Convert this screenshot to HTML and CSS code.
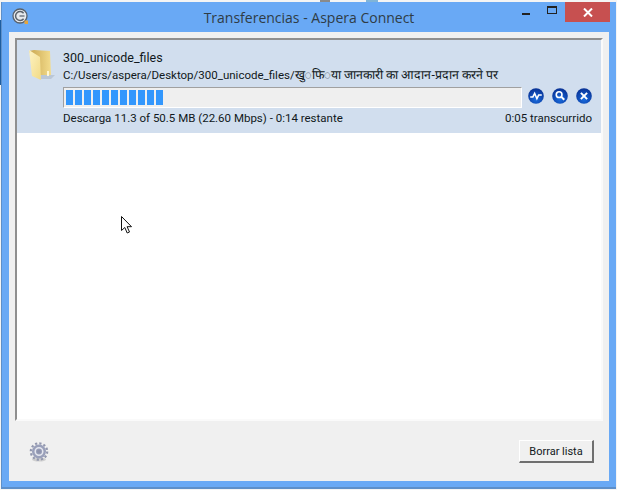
FILE: index.html
```html
<!DOCTYPE html>
<html lang="es">
<head>
<meta charset="utf-8">
<title>Transferencias - Aspera Connect</title>
<link rel="stylesheet" href="styles.css">
</head>
<body>
<div class="window">
  <header class="titlebar">
    <svg class="app-icon" width="16" height="16" viewBox="0 0 16 16">
      <circle cx="8" cy="8" r="7" fill="#e6e9ed" stroke="#59616b" stroke-width="1.3"/>
      <path d="M11.6 5.2A4.5 4.5 0 1 0 11.6 10.8" fill="none" stroke="#59616b" stroke-width="1.5"/>
      <path d="M7.5 8h5" stroke="#6b737d" stroke-width="1.4"/>
      <rect x="12.5" y="12.5" width="3.5" height="3.5" fill="#e5a53c"/>
    </svg>
    <h1 class="title">Transferencias - Aspera Connect</h1>
    <div class="controls">
      <span class="ctl ctl-min"><i class="min-bar"></i></span>
      <span class="ctl ctl-max"><i class="max-box"></i></span>
      <span class="ctl ctl-close">
        <svg width="10" height="9" viewBox="0 0 10 9"><path d="M1 .5l8 8M9 .5l-8 8" stroke="#fff" stroke-width="2"/></svg>
      </span>
    </div>
  </header>
  <div class="client">
    <main class="list">
      <section class="transfer">
        <svg class="folder" width="30" height="34" viewBox="0 0 30 34">
          <defs>
            <linearGradient id="fg" x1="0" y1="0" x2="1" y2="1"><stop offset="0" stop-color="#fdf3c4"/><stop offset="1" stop-color="#f2da85"/></linearGradient>
            <linearGradient id="bk" x1="0" y1="0" x2="1" y2="0"><stop offset="0" stop-color="#c9a650"/><stop offset="1" stop-color="#f3dc8c"/></linearGradient>
          </defs>
          <path d="M14 27l14 0 -4 4 -10 0z" fill="#a9b4c2" opacity=".55"/>
          <path d="M2 3l5 -1 16 1 1 24 -12 0z" fill="url(#bk)"/>
          <path d="M2 2l11 7 1 23 -9 -4z" fill="url(#fg)"/>
          <path d="M20 23h2v5h-2z" fill="#fff7d4"/>
        </svg>
        <div class="info">
          <div class="name">300_unicode_files</div>
          <div class="path">C:/Users/aspera/Desktop/300_unicode_files/<span class="deva">खु◌फि◌या जानकारी का आदान-प्रदान करने पर</span></div>
          <div class="bar-row">
            <div class="bar">
              <div class="fill"></div>
            </div>
            <div class="actions">
              <svg class="act" width="16" height="16" viewBox="0 0 18 18"><use href="#disc"/><path d="M2.5 10h3l2-4 2.5 6 2-4h3.5" fill="none" stroke="#fff" stroke-width="1.7"/></svg>
              <svg class="act" width="16" height="16" viewBox="0 0 18 18"><use href="#disc"/><circle cx="8" cy="7.5" r="3.2" fill="none" stroke="#fff" stroke-width="1.8"/><path d="M10.5 10l3.3 3.3" stroke="#fff" stroke-width="2.3"/></svg>
              <svg class="act" width="16" height="16" viewBox="0 0 18 18"><use href="#disc"/><path d="M5.5 5.5l7 7M12.5 5.5l-7 7" stroke="#fff" stroke-width="2.2"/></svg>
            </div>
          </div>
          <div class="status">
            <span>Descarga 11.3 of 50.5 MB (22.60 Mbps) - 0:14 restante</span>
            <span>0:05 transcurrido</span>
          </div>
        </div>
      </section>
      <svg class="cursor" width="14" height="20" viewBox="0 0 14 20"><path d="M1.5 1.5v14l3.3-3 2.4 5.5 2.3-1-2.4-5.3h4.4z" fill="#fff" stroke="#111" stroke-width="1"/></svg>
    </main>
    <footer class="footer">
      <svg class="gear" width="20" height="20" viewBox="0 0 20 20">
        <ellipse cx="10" cy="17.5" rx="7" ry="2" fill="#cfcfcf"/>
        <circle cx="10" cy="9.5" r="8.2" fill="none" stroke="#9297ae" stroke-width="2.2" stroke-dasharray="2.2 2.1"/>
        <circle cx="10" cy="9.5" r="7" fill="#9aa0ba"/>
        <circle cx="10" cy="9.5" r="3.8" fill="none" stroke="#e4e6ee" stroke-width="1.5"/>
        <circle cx="10" cy="9.5" r="2" fill="#8e93ad"/>
      </svg>
      <button class="clear" type="button">Borrar lista</button>
    </footer>
  </div>
</div>
<svg class="defs" width="0" height="0" aria-hidden="true">
  <defs>
    <radialGradient id="dg" cx=".5" cy=".7" r=".7"><stop offset="0" stop-color="#1a6ee0"/><stop offset="1" stop-color="#072f92"/></radialGradient>
    <circle id="disc" cx="9" cy="9" r="8.8" fill="url(#dg)"/>
  </defs>
</svg>
</body>
</html>
```
FILE: styles.css
```css
* { box-sizing: border-box; }
html, body { margin: 0; height: 100%; }
body {
  background:
    linear-gradient(#1d5da0, #1d5da0) 0 20px / 1px 65px no-repeat,
    linear-gradient(#8a8a8a, #8a8a8a) 320px 0 / 10px 2px no-repeat,
    linear-gradient(#7fb4d8, #7fb4d8) 366px 0 / 12px 2px no-repeat,
    #f4f4f4;
  padding: 2px 1px 1px 1px;
  font-family: "Open Sans", "Noto Sans", sans-serif;
  overflow: hidden;
}
.defs { position: absolute; }
.window {
  width: 615px;
  height: 487px;
  background: #69a9f5;
  border-bottom: 2px solid #5d8fc9;
  border-left: 1px solid #5d8fc9;
  padding: 0 7px 6px 7px;
  display: flex;
  flex-direction: column;
}
.titlebar {
  height: 30px;
  flex: none;
  display: flex;
  align-items: flex-start;
  position: relative;
}
.app-icon { margin: 6px 0 0 3px; }
.title {
  position: absolute;
  left: 0; right: 0; top: 6px;
  margin: 0;
  text-align: center;
  font-size: 14px;
  line-height: 19px;
  font-weight: 400;
  color: #2f3c45;
}
.controls { margin-left: auto; display: flex; align-items: flex-start; margin-right: -1px; }
.ctl { display: flex; align-items: center; justify-content: center; height: 20px; }
.ctl-min { width: 27px; }
.ctl-max { width: 26px; }
.ctl-close { width: 45px; background: #c75050; }
.min-bar { width: 8px; height: 2px; background: #222; margin-top: 4px; }
.max-box { width: 10px; height: 8px; border: 1px solid #222; border-top-width: 2px; margin-top: -4px; }
.client {
  flex: 1;
  background: #f0f0f0;
  padding: 6px;
  display: flex;
  flex-direction: column;
  min-height: 0;
}
.list {
  height: 383px;
  flex: none;
  background: #fff;
  border-top: 2px solid #8f8f8f;
  border-left: 2px solid #8f8f8f;
  border-right: 2px solid #fafafa;
  border-bottom: 2px solid #fafafa;
  position: relative;
}
.transfer {
  height: 93px;
  background: #d1deee;
  display: flex;
  padding: 7px 9px 0 10px;
}
.folder { flex: none; margin-top: 1px; }
.info { flex: 1; margin-left: 6px; min-width: 0; font-family: Roboto, "Open Sans", sans-serif; font-size: 11.5px; color: #101820; }
.name { line-height: 17px; margin-top: 2px; font-size: 12.5px; }
.path { line-height: 17px; margin-top: 1px; white-space: nowrap; }
.deva { font-size: 12.3px; }
.bar-row { display: flex; align-items: flex-start; margin-top: 3px; }
.bar {
  width: 459px;
  height: 21px;
  flex: none;
  background: #efefef;
  border-top: 1px solid #a0a0a0;
  border-left: 1px solid #a0a0a0;
  border-right: 1px solid #fff;
  border-bottom: 1px solid #fff;
  padding: 2px;
}
.fill {
  width: 97px;
  height: 15px;
  background: repeating-linear-gradient(90deg, #3297fd 0 7px, #efefef 7px 9px);
}
.actions { display: flex; gap: 8px; margin: 1px 0 0 6px; }
.status { display: flex; justify-content: space-between; line-height: 17px; margin-top: 2px; }
.cursor { position: absolute; left: 103px; top: 175px; }
.footer {
  flex: 1;
  display: flex;
  align-items: flex-start;
  justify-content: space-between;
  padding: 19px 9px 0 14px;
}
.gear { margin-top: 2px; }
.clear {
  width: 75px;
  height: 23px;
  padding: 0;
  background: #f0f0f0;
  border-top: 1px solid #fff;
  border-left: 1px solid #fff;
  border-right: 2px solid #6f6f6f;
  border-bottom: 2px solid #6f6f6f;
  font-family: Roboto, "Open Sans", sans-serif;
  font-size: 11px;
  color: #101820;
}
```
